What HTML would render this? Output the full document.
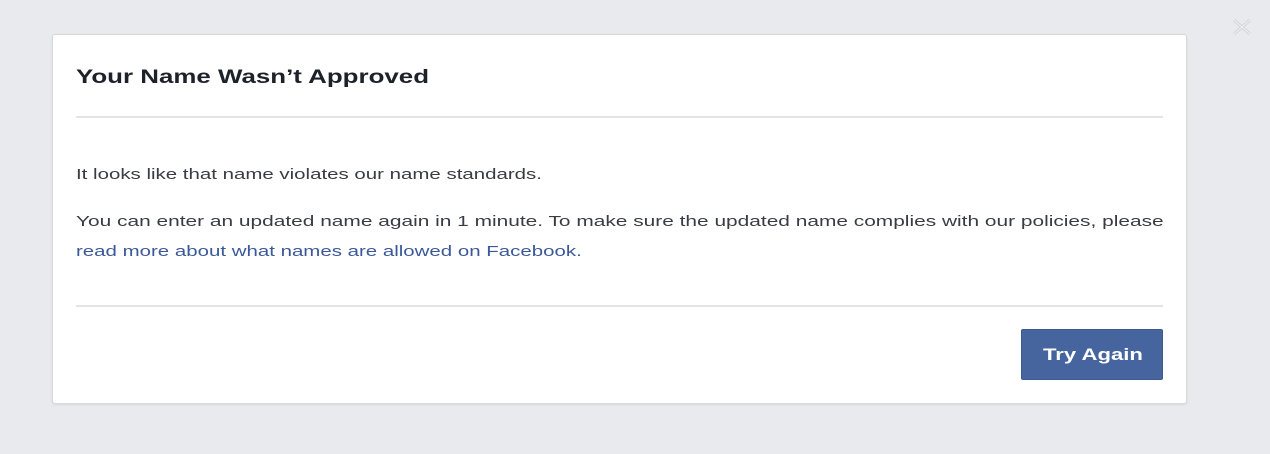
<!DOCTYPE html>
<html><head><style>
body{margin:0;width:1270px;height:454px;background:#e9eaed;font-family:"Liberation Sans",sans-serif;position:relative;overflow:hidden}
.card{position:absolute;left:52px;top:34px;width:1133px;height:368px;background:#fff;border:1px solid #d6d8dc;border-radius:3px;box-shadow:0 1px 2px rgba(0,0,0,.08)}
.s{display:inline-block;transform-origin:0 50%;white-space:nowrap}
.t{position:absolute;left:23px;top:32px;font-size:19px;font-weight:bold;color:#1d2129}
.hr{position:absolute;left:23px;width:1087px;height:2px;background:#e3e4e6}
.p{position:absolute;left:23px;font-size:14.5px;color:#383c43;line-height:30px;white-space:nowrap}
a{color:#3b5998;text-decoration:none}
.btn{position:absolute;left:968px;top:294px;width:142px;height:51px;background:#46649e;border:1px solid #3f5a91;border-radius:2px;box-sizing:border-box;color:#fff;font-weight:bold;font-size:17px;line-height:49px}
.x{position:absolute;left:1232px;top:19px}
</style></head><body>
<svg class="x" width="20" height="16" viewBox="0 0 20 16"><path d="M2 1L18 15M18 1L2 15" stroke="#d3d4d7" stroke-width="3"/><path d="M2 1L18 15M18 1L2 15" stroke="#f2f2f3" stroke-width="1"/></svg>
<div class="card">
<div class="t"><span class="s" style="transform:scaleX(1.363)">Your Name Wasn’t Approved</span></div>
<div class="hr" style="top:81px"></div>
<div class="p" style="top:125px"><span class="s" style="transform:scaleX(1.41)">It looks like that name violates our name standards.</span></div>
<div class="p" style="top:172px"><span class="s" style="transform:scaleX(1.44)">You can enter an updated name again in 1 minute. To make sure the updated name complies with our policies, please</span></div>
<div class="p" style="top:202px"><a class="s" style="transform:scaleX(1.41)">read more about what names are allowed on Facebook.</a></div>
<div class="hr" style="top:270px"></div>
<div class="btn"><span class="s" style="position:absolute;left:21px;transform:scaleX(1.3)">Try Again</span></div>
</div>
</body></html>
